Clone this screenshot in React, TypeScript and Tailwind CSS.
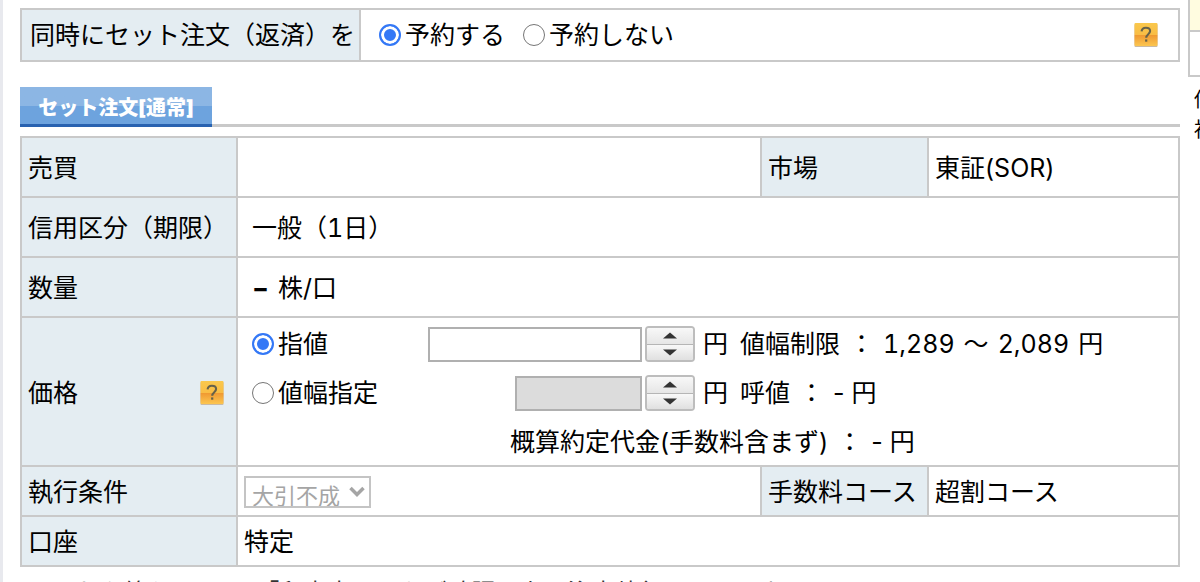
import { type ReactNode, useState } from "react";

const LABEL = "border-2 border-[#c9c9c9] bg-[#e4edf2] text-left font-normal px-1.5 pt-0.5 whitespace-nowrap";
const CELL = "border-2 border-[#c9c9c9] bg-white px-1.5 pt-0.5";

function HelpButton({ label }: { label: string }) {
  return (
    <button type="button" aria-label={label} className="block shrink-0">
      <svg width="24" height="24" viewBox="0 0 24 24" aria-hidden="true">
        <defs>
          <linearGradient id="help" x1="0" y1="0" x2="0" y2="1">
            <stop offset="0" stopColor="#fac84c" />
            <stop offset="0.5" stopColor="#f9bd45" />
            <stop offset="0.54" stopColor="#f09a32" />
            <stop offset="1" stopColor="#fcc650" />
          </linearGradient>
        </defs>
        <rect x="0.5" y="1" width="23" height="23" rx="1" fill="#c9b9a4" />
        <rect x="0.5" y="0" width="23" height="23" rx="1" fill="url(#help)" />
        <path
          d="M7.600 8.400C7.800 5.800 9.500 4.700 11.900 4.700c2.500 0 4.200 1.300 4.200 3.400 0 3-3.900 3.200-3.900 6.600"
          fill="none"
          stroke="#66624a"
          strokeWidth="2.100"
        />
        <rect x="11.100" y="16.400" width="2.200" height="2.300" fill="#66624a" />
      </svg>
    </button>
  );
}

interface RadioProps {
  name: string;
  checked: boolean;
  onSelect: () => void;
  children: ReactNode;
}

function Radio({ name, checked, onSelect, children }: RadioProps) {
  return (
    <label className="flex items-center gap-1 whitespace-nowrap">
      <input
        type="radio"
        name={name}
        checked={checked}
        onChange={onSelect}
        className="size-[22px] shrink-0 appearance-none rounded-full border border-[#767676] bg-white checked:border-2 checked:border-[#3478f6] checked:bg-[#3478f6] checked:shadow-[inset_0_0_0_3px_white]"
      />
      <span>{children}</span>
    </label>
  );
}

function Spinner({ label }: { label: string }) {
  return (
    <div className="ml-[3px] flex h-9 w-[50px] shrink-0 flex-col overflow-hidden rounded-[4px] border-2 border-[#bdbdbd]">
      <button
        type="button"
        aria-label={`${label} +`}
        className="flex flex-1 items-center justify-center border-b border-[#b5b5b5] bg-linear-to-b from-[#f8f8f8] to-[#e6e6e6]"
      >
        <svg width="16" height="7" viewBox="0 0 16 7" aria-hidden="true">
          <path d="M8 0.500 15 6.500H1z" fill="#333" />
        </svg>
      </button>
      <button
        type="button"
        aria-label={`${label} -`}
        className="flex flex-1 items-center justify-center bg-linear-to-b from-[#f8f8f8] to-[#e0e0e0]"
      >
        <svg width="16" height="7" viewBox="0 0 16 7" aria-hidden="true">
          <path d="M8 6.500 15 0.500H1z" fill="#333" />
        </svg>
      </button>
    </div>
  );
}

function Term({ name, children }: { name: string; children: ReactNode }) {
  return (
    <span className="flex gap-[9px]">
      <span>{name}</span>
      <span>：</span>
      {children}
    </span>
  );
}

function PriceFields() {
  const [mode, setMode] = useState("limit");

  return (
    <div className="flex flex-col gap-[13px] pt-1.5 pl-2 whitespace-nowrap">
      <div className="flex h-9 items-center">
        <div className="w-44 shrink-0">
          <Radio name="price" checked={mode === "limit"} onSelect={() => setMode("limit")}>
            指値
          </Radio>
        </div>
        <input type="text" aria-label="指値" className="h-[35px] w-[214px] border-2 border-[#b0b0b0] bg-white px-1" />
        <Spinner label="指値" />
        <span className="mr-3 ml-2">円</span>
        <Term name="値幅制限">
          <span className="tabular-nums">1,289</span>
          <span>〜</span>
          <span className="tabular-nums">2,089</span>
          <span>円</span>
        </Term>
      </div>
      <div className="flex h-9 items-center">
        <div className="w-44 shrink-0">
          <Radio name="price" checked={mode === "range"} onSelect={() => setMode("range")}>
            値幅指定
          </Radio>
        </div>
        <div className="flex w-[214px] justify-end">
          <input
            type="text"
            aria-label="値幅指定"
            disabled={mode !== "range"}
            className="h-[35px] w-[127px] border-2 border-[#b0b0b0] bg-white px-1 disabled:bg-[#dcdcdc]"
          />
        </div>
        <Spinner label="値幅指定" />
        <span className="mr-3 ml-2">円</span>
        <Term name="呼値">
          <span>- 円</span>
        </Term>
      </div>
      <div className="flex h-9 items-center pl-[258px]">
        <Term name="概算約定代金(手数料含まず)">
          <span>- 円</span>
        </Term>
      </div>
    </div>
  );
}

function OrderTable() {
  return (
    <table className="mt-[9px] w-full table-fixed border-collapse">
      <colgroup>
        <col className="w-[216px]" />
        <col />
        <col className="w-[167px]" />
        <col className="w-[251px]" />
      </colgroup>
      <tbody>
        <tr className="h-[60px]">
          <th scope="row" className={LABEL}>売買</th>
          <td className={CELL} />
          <th scope="row" className={LABEL}>市場</th>
          <td className={CELL}>東証(SOR)</td>
        </tr>
        <tr className="h-[60px]">
          <th scope="row" className={LABEL}>信用区分（期限）</th>
          <td colSpan={3} className={CELL}>
            <div className="pl-2 tabular-nums">一般（1日）</div>
          </td>
        </tr>
        <tr className="h-[60px]">
          <th scope="row" className={LABEL}>数量</th>
          <td colSpan={3} className={CELL}>
            <div className="flex gap-[9px] pl-2">
              <b>−</b>
              <span>株/口</span>
            </div>
          </td>
        </tr>
        <tr className="h-[149px]">
          <th scope="row" className={LABEL}>
            <div className="flex items-center justify-between pr-1.5">
              価格
              <HelpButton label="価格のヘルプ" />
            </div>
          </th>
          <td colSpan={3} className={`${CELL} align-top`}>
            <PriceFields />
          </td>
        </tr>
        <tr className="h-[50px]">
          <th scope="row" className={LABEL}>執行条件</th>
          <td className={CELL}>
            <div className="relative w-[127px] text-[#a5a5a5]">
              <select
                disabled
                aria-label="執行条件"
                className="block h-8 w-full appearance-none overflow-hidden border-2 border-[#c4c4c4] bg-white pt-1 pl-1.5 text-[22px] leading-7"
              >
                <option>大引不成</option>
              </select>
              <svg className="absolute top-2.5 right-1.5" width="16" height="11" viewBox="0 0 16 11" aria-hidden="true">
                <path d="M1.500 2 8 8.500 14.500 2" fill="none" stroke="currentColor" strokeWidth="3.500" />
              </svg>
            </div>
          </td>
          <th scope="row" className={LABEL}>手数料コース</th>
          <td className={CELL}>超割コース</td>
        </tr>
        <tr className="h-[50px]">
          <th scope="row" className={LABEL}>口座</th>
          <td colSpan={3} className={CELL}>特定</td>
        </tr>
      </tbody>
    </table>
  );
}

export default function App() {
  const [reserve, setReserve] = useState(true);

  return (
    <div
      lang="ja"
      className="flex h-screen overflow-hidden bg-white font-['Inter','Noto_Sans_CJK_JP',sans-serif] text-[25px] leading-9 text-black"
    >
      <div className="w-[3px] shrink-0 bg-[#e8e9ee]" />
      <main className="mr-2 ml-[17px] min-w-0 flex-1 pt-2">
        <div className="flex h-[54px] border-2 border-[#c9c9c9]">
          <div className="flex w-[339px] shrink-0 items-center border-r-2 border-[#c9c9c9] bg-[#e4edf2] pl-2 whitespace-nowrap">
            同時にセット注文（返済）を
          </div>
          <div className="flex flex-1 items-center gap-[18px] pr-5 pl-[18px]">
            <Radio name="reserve" checked={reserve} onSelect={() => setReserve(true)}>
              予約する
            </Radio>
            <Radio name="reserve" checked={!reserve} onSelect={() => setReserve(false)}>
              予約しない
            </Radio>
            <div className="ml-auto">
              <HelpButton label="セット注文のヘルプ" />
            </div>
          </div>
        </div>

        <div className="mt-[25px] flex h-10 border-b-[3px] border-[#c9c9c9]">
          <h2 className="-mb-[3px] flex w-48 items-center justify-center border-b-[3px] border-[#2862b0] bg-linear-to-b from-[#8cb6e4] from-50% to-[#6da3de] to-50% pt-1 text-xl font-black whitespace-nowrap text-white">
            セット注文[通常]
          </h2>
        </div>

        <OrderTable />
        <p className="mt-2 pl-8 text-2xl leading-9 whitespace-nowrap text-[#333]">
          これを終えるには、「留意事項」をご確認の上、注文執行してください
        </p>
      </main>
      <aside className="w-3 shrink-0 overflow-hidden">
        <div className="h-[77px] w-40 border-b-2 border-l-2 border-[#c9c9c9]">
          <div className="h-8 border-b-2 border-[#c9c9c9] bg-[#fffce0]" />
        </div>
        <p className="mt-2 w-40 pl-1.5 text-xl leading-[30px]">
          値幅
          <br />
          神戸
        </p>
      </aside>
    </div>
  );
}
